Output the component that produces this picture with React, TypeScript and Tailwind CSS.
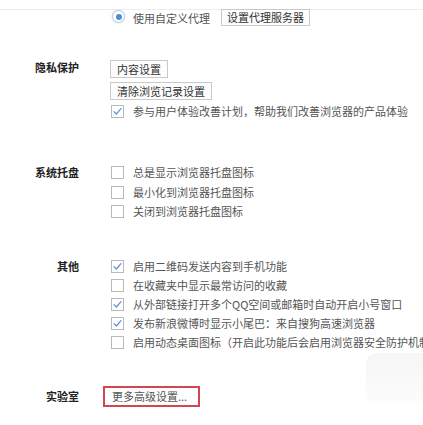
import React from 'react';

const font = { fontFamily: '"Noto Sans CJK SC", "Noto Sans", sans-serif' };

const Check: React.FC<{ checked?: boolean }> = ({ checked }) => (
  <span className="w-[13px] h-[13px] shrink-0 border border-[#b9b9b9] bg-white flex items-center justify-center">
    {checked && (
      <svg width="11" height="11" viewBox="0 0 11 11" fill="none">
        <path d="M2 5.6 L4.4 8 L9 2.6" stroke="#5a8fd2" strokeWidth="1.2" strokeLinecap="round" strokeLinejoin="round" />
      </svg>
    )}
  </span>
);

const Row: React.FC<{ checked?: boolean; text: string; tall?: boolean }> = ({ checked, text, tall }) => (
  <div className={`${tall ? 'h-[19.5px]' : 'h-[19px]'} flex items-center gap-[9px] ml-[2px] whitespace-nowrap`}>
    <Check checked={checked} />
    <span className="text-[11px] leading-none text-[#555]">{text}</span>
  </div>
);

const Btn: React.FC<{ children: React.ReactNode }> = ({ children }) => (
  <div className="h-[18px] px-[6px] border border-[#c9c9c9] bg-[#fdfdfd] flex items-center text-[11px] leading-none text-[#333] whitespace-nowrap self-start">
    {children}
  </div>
);

const Label: React.FC<{ children: React.ReactNode }> = ({ children }) => (
  <div className="text-right text-[11px] font-bold text-[#222] leading-[18px] whitespace-nowrap">{children}</div>
);

export default function App() {
  return (
    <div className="relative w-[423px] h-[425px] bg-white overflow-hidden" style={font}>
      <div className="h-[9px]" />
      <div className="h-px bg-[#ededed]" />
      <div className="flex items-center h-[16px] pl-[112px] whitespace-nowrap">
        <span className="w-[13px] h-[13px] -mt-[3px] rounded-full border border-[#b8c8dc] bg-white flex items-center justify-center shadow-[0_0_2px_#c5d8ef]">
          <span className="w-[6px] h-[6px] rounded-full bg-[#4f8bd6]" />
        </span>
        <span className="ml-[8px] text-[11px] leading-none text-[#555]">使用自定义代理</span>
        <div className="ml-[11px] h-[17px] -mt-px px-[5px] border border-[#c9c9c9] bg-[#fdfdfd] flex items-center text-[11px] leading-none text-[#333]">
          设置代理服务器
        </div>
      </div>

      <div className="grid grid-cols-[79px_1fr] gap-x-[30px] mt-[34px]">
        <div className="-mt-[2px]">
          <Label>隐私保护</Label>
        </div>
        <div className="flex flex-col">
          <div className="ml-px flex flex-col gap-[4px]">
            <Btn>内容设置</Btn>
            <Btn>清除浏览记录设置</Btn>
          </div>
          <div className="mt-[2px]">
            <Row checked text="参与用户体验改善计划，帮助我们改善浏览器的产品体验" />
          </div>
        </div>
      </div>

      <div className="grid grid-cols-[79px_1fr] gap-x-[30px] mt-[42px]">
        <Label>系统托盘</Label>
        <div className="flex flex-col">
          <Row tall text="总是显示浏览器托盘图标" />
          <Row tall text="最小化到浏览器托盘图标" />
          <Row tall text="关闭到浏览器托盘图标" />
        </div>
      </div>

      <div className="grid grid-cols-[79px_1fr] gap-x-[30px] mt-[35px]">
        <Label>其他</Label>
        <div className="flex flex-col">
          <Row checked text="启用二维码发送内容到手机功能" />
          <Row text="在收藏夹中显示最常访问的收藏" />
          <Row checked text="从外部链接打开多个QQ空间或邮箱时自动开启小号窗口" />
          <Row checked text="发布新浪微博时显示小尾巴：来自搜狗高速浏览器" />
          <Row text="启用动态桌面图标（开启此功能后会启用浏览器安全防护机制）" />
        </div>
      </div>

      <div className="grid grid-cols-[79px_1fr] gap-x-[24px] mt-[34px] items-center">
        <Label>实验室</Label>
        <div className="w-[97px] h-[21px] border-2 border-[#d2474f] bg-white flex items-center pl-[7px] text-[11px] leading-none text-[#555] whitespace-nowrap">
          更多高级设置...
        </div>
      </div>

      <div className="absolute left-[366px] top-[353px] w-[80px] h-[48px] rounded-tl-[10px] bg-gradient-to-b from-[#f2f2f2] to-[#fafafa] opacity-70" />
    </div>
  );
}
